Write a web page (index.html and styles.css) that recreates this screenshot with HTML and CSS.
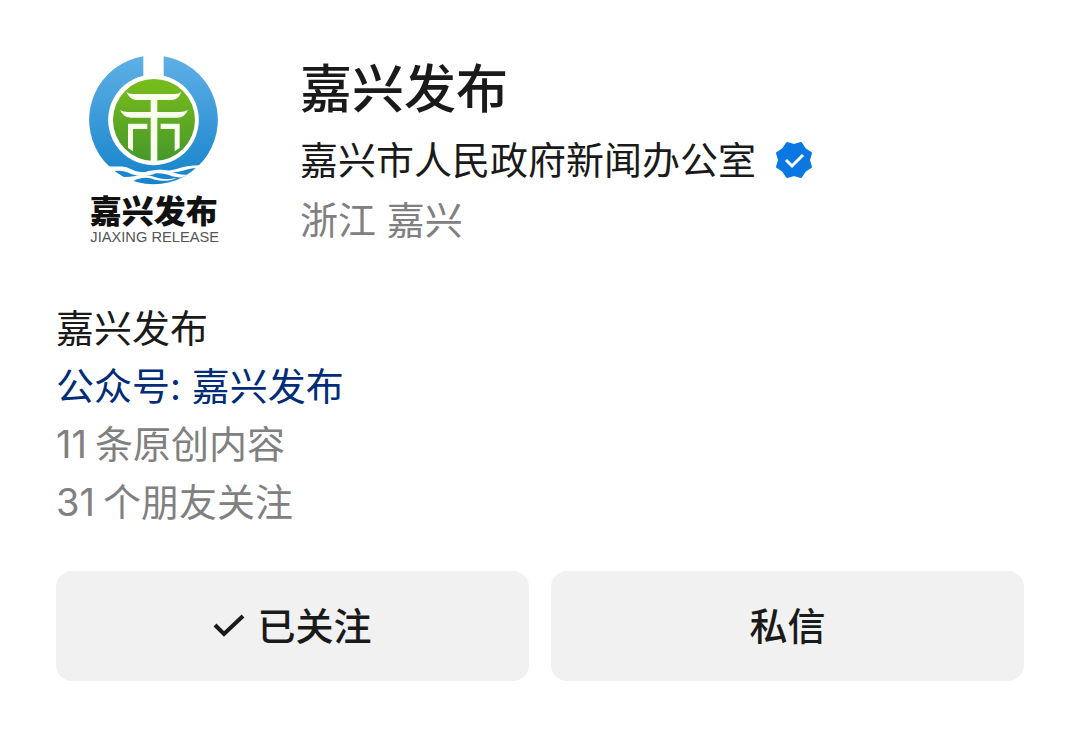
FILE: index.html
```html
<!DOCTYPE html>
<html lang="zh-CN">
<head>
    <meta charset="UTF-8">
    <meta name="viewport" content="width=device-width, initial-scale=1.0">
    <title>嘉兴发布</title>
    <link rel="stylesheet" href="styles.css">
</head>
<body>
    <main class="profile">
        <header class="header">
            <svg class="avatar" viewBox="-42 30 600 600" role="img" aria-label="嘉兴发布">
                <defs>
                    <linearGradient id="ring" x1="0" y1="0" x2="0" y2="1">
                        <stop offset="0" stop-color="#5fb0e6"/>
                        <stop offset="1" stop-color="#1583cb"/>
                    </linearGradient>
                    <linearGradient id="disc" x1="0" y1="0" x2="0" y2="1">
                        <stop offset="0" stop-color="#79bd1c"/>
                        <stop offset="1" stop-color="#46982a"/>
                    </linearGradient>
                </defs>
                <path fill="url(#ring)" d="M220 49A193 193 0 1 0 281 49V107A136 136 0 1 1 220 107Z"/>
                <circle cx="252" cy="240" r="123" fill="url(#disc)"/>
                <g fill="#f8fdec">
                    <path d="M168 155Q176 162 188 162H314Q326 162 334 155Q326 180 304 180H198Q180 178 168 155Z"/>
                    <path d="M150 210Q160 216 174 216H328Q342 216 354 210Q344 233 322 233H182Q160 232 150 210Z"/>
                    <path d="M242 176H262V366H242Z"/>
                    <path d="M174 251H232V267H189V334L174 324Z"/>
                    <path d="M329 251H272V267H314V334L329 324Z"/>
                </g>
                <!-- waves -->
                <g fill="#fff">
                    <path d="M100 376C130 384 152 376 170 382C190 390 198 398 226 396C250 390 268 386 300 394C318 400 334 406 352 404L336 412C306 414 288 396 258 400C232 410 206 410 184 402C164 392 150 390 118 394Z"/>
                    <path d="M124 404C146 412 170 412 196 408C222 402 240 406 264 414C284 420 304 416 320 414C296 426 268 424 246 416C222 410 204 416 192 422L160 428Z"/>
                    <path d="M404 376C372 374 346 378 322 386C304 392 288 392 276 390C296 402 330 396 346 390C362 384 376 384 392 386Z"/>
                </g>
                <text class="logo-name" x="59" y="549">嘉兴发布</text>
                <text class="logo-sub" x="61" y="606">JIAXING RELEASE</text>
            </svg>
            <div class="identity">
                <h1>嘉兴发布</h1>
                <p class="org">
                    嘉兴市人民政府新闻办公室
                    <svg class="badge" viewBox="0 0 36 36" role="img" aria-label="已认证">
                        <path fill="#0a78e0" stroke="#0a78e0" stroke-width="2" stroke-linejoin="round" d="M11 1L18 3L25 1L29 7L35 11L33 18L35 25L29 29L25 35L18 33L11 35L7 29L1 25L3 18L1 11L7 7Z"/>
                        <path fill="none" stroke="#fff" stroke-width="3" d="M10 18L16 24L27 13"/>
                    </svg>
                </p>
                <p class="region">浙江 嘉兴</p>
            </div>
        </header>
        <section class="info">
            <p>嘉兴发布</p>
            <p><a href="#">公众号: 嘉兴发布</a></p>
            <p class="muted"><span class="count">11</span>条原创内容</p>
            <p class="muted"><span class="count">31</span>个朋友关注</p>
        </section>
        <div class="actions">
            <button type="button">
                <svg class="check" viewBox="0 0 32 24" aria-hidden="true">
                    <path fill="none" stroke="#1a1a1a" stroke-width="4" d="M2 11L11 20L30 2"/>
                </svg>
                已关注
            </button>
            <button type="button">私信</button>
        </div>
    </main>
</body>
</html>
```
FILE: styles.css
```css
* {
    box-sizing: border-box;
}
body {
    margin: 0;
    background-color: #fff;
    color: #1a1a1a;
    font-family: Inter, "Noto Sans CJK SC", sans-serif;
    font-size: 38px;
    line-height: 58px;
}
h1,
p {
    margin: 0;
}
.profile {
    padding: 50px 56px;
}
.header {
    display: flex;
    gap: 44px;
}
.avatar {
    width: 200px;
    height: 200px;
    flex-shrink: 0;
}
.logo-name {
    font-size: 96px;
    font-weight: 900;
    fill: #111;
}
.logo-sub {
    font-family: "Liberation Sans", Arial, sans-serif;
    font-size: 44px;
    fill: #555;
}
h1 {
    font-size: 52px;
    font-weight: 500;
    line-height: 80px;
}
.org {
    display: flex;
    align-items: center;
    gap: 20px;
    line-height: 60px;
}
.badge {
    width: 36px;
    height: 36px;
}
.region {
    color: #808080;
    line-height: 60px;
}
.info {
    margin-top: 49px;
}
.info a {
    color: #002c78;
    text-decoration: none;
}
.muted {
    color: #808080;
}
.count {
    margin-right: 8px;
}
.actions {
    display: flex;
    gap: 22px;
    margin-top: 40px;
}
.actions button {
    flex: 1;
    display: flex;
    justify-content: center;
    align-items: center;
    gap: 12px;
    height: 110px;
    border: none;
    border-radius: 16px;
    background-color: #f1f1f1;
    color: #1a1a1a;
    font: inherit;
    font-weight: 500;
    cursor: pointer;
}
.check {
    width: 32px;
    height: 24px;
}
```
